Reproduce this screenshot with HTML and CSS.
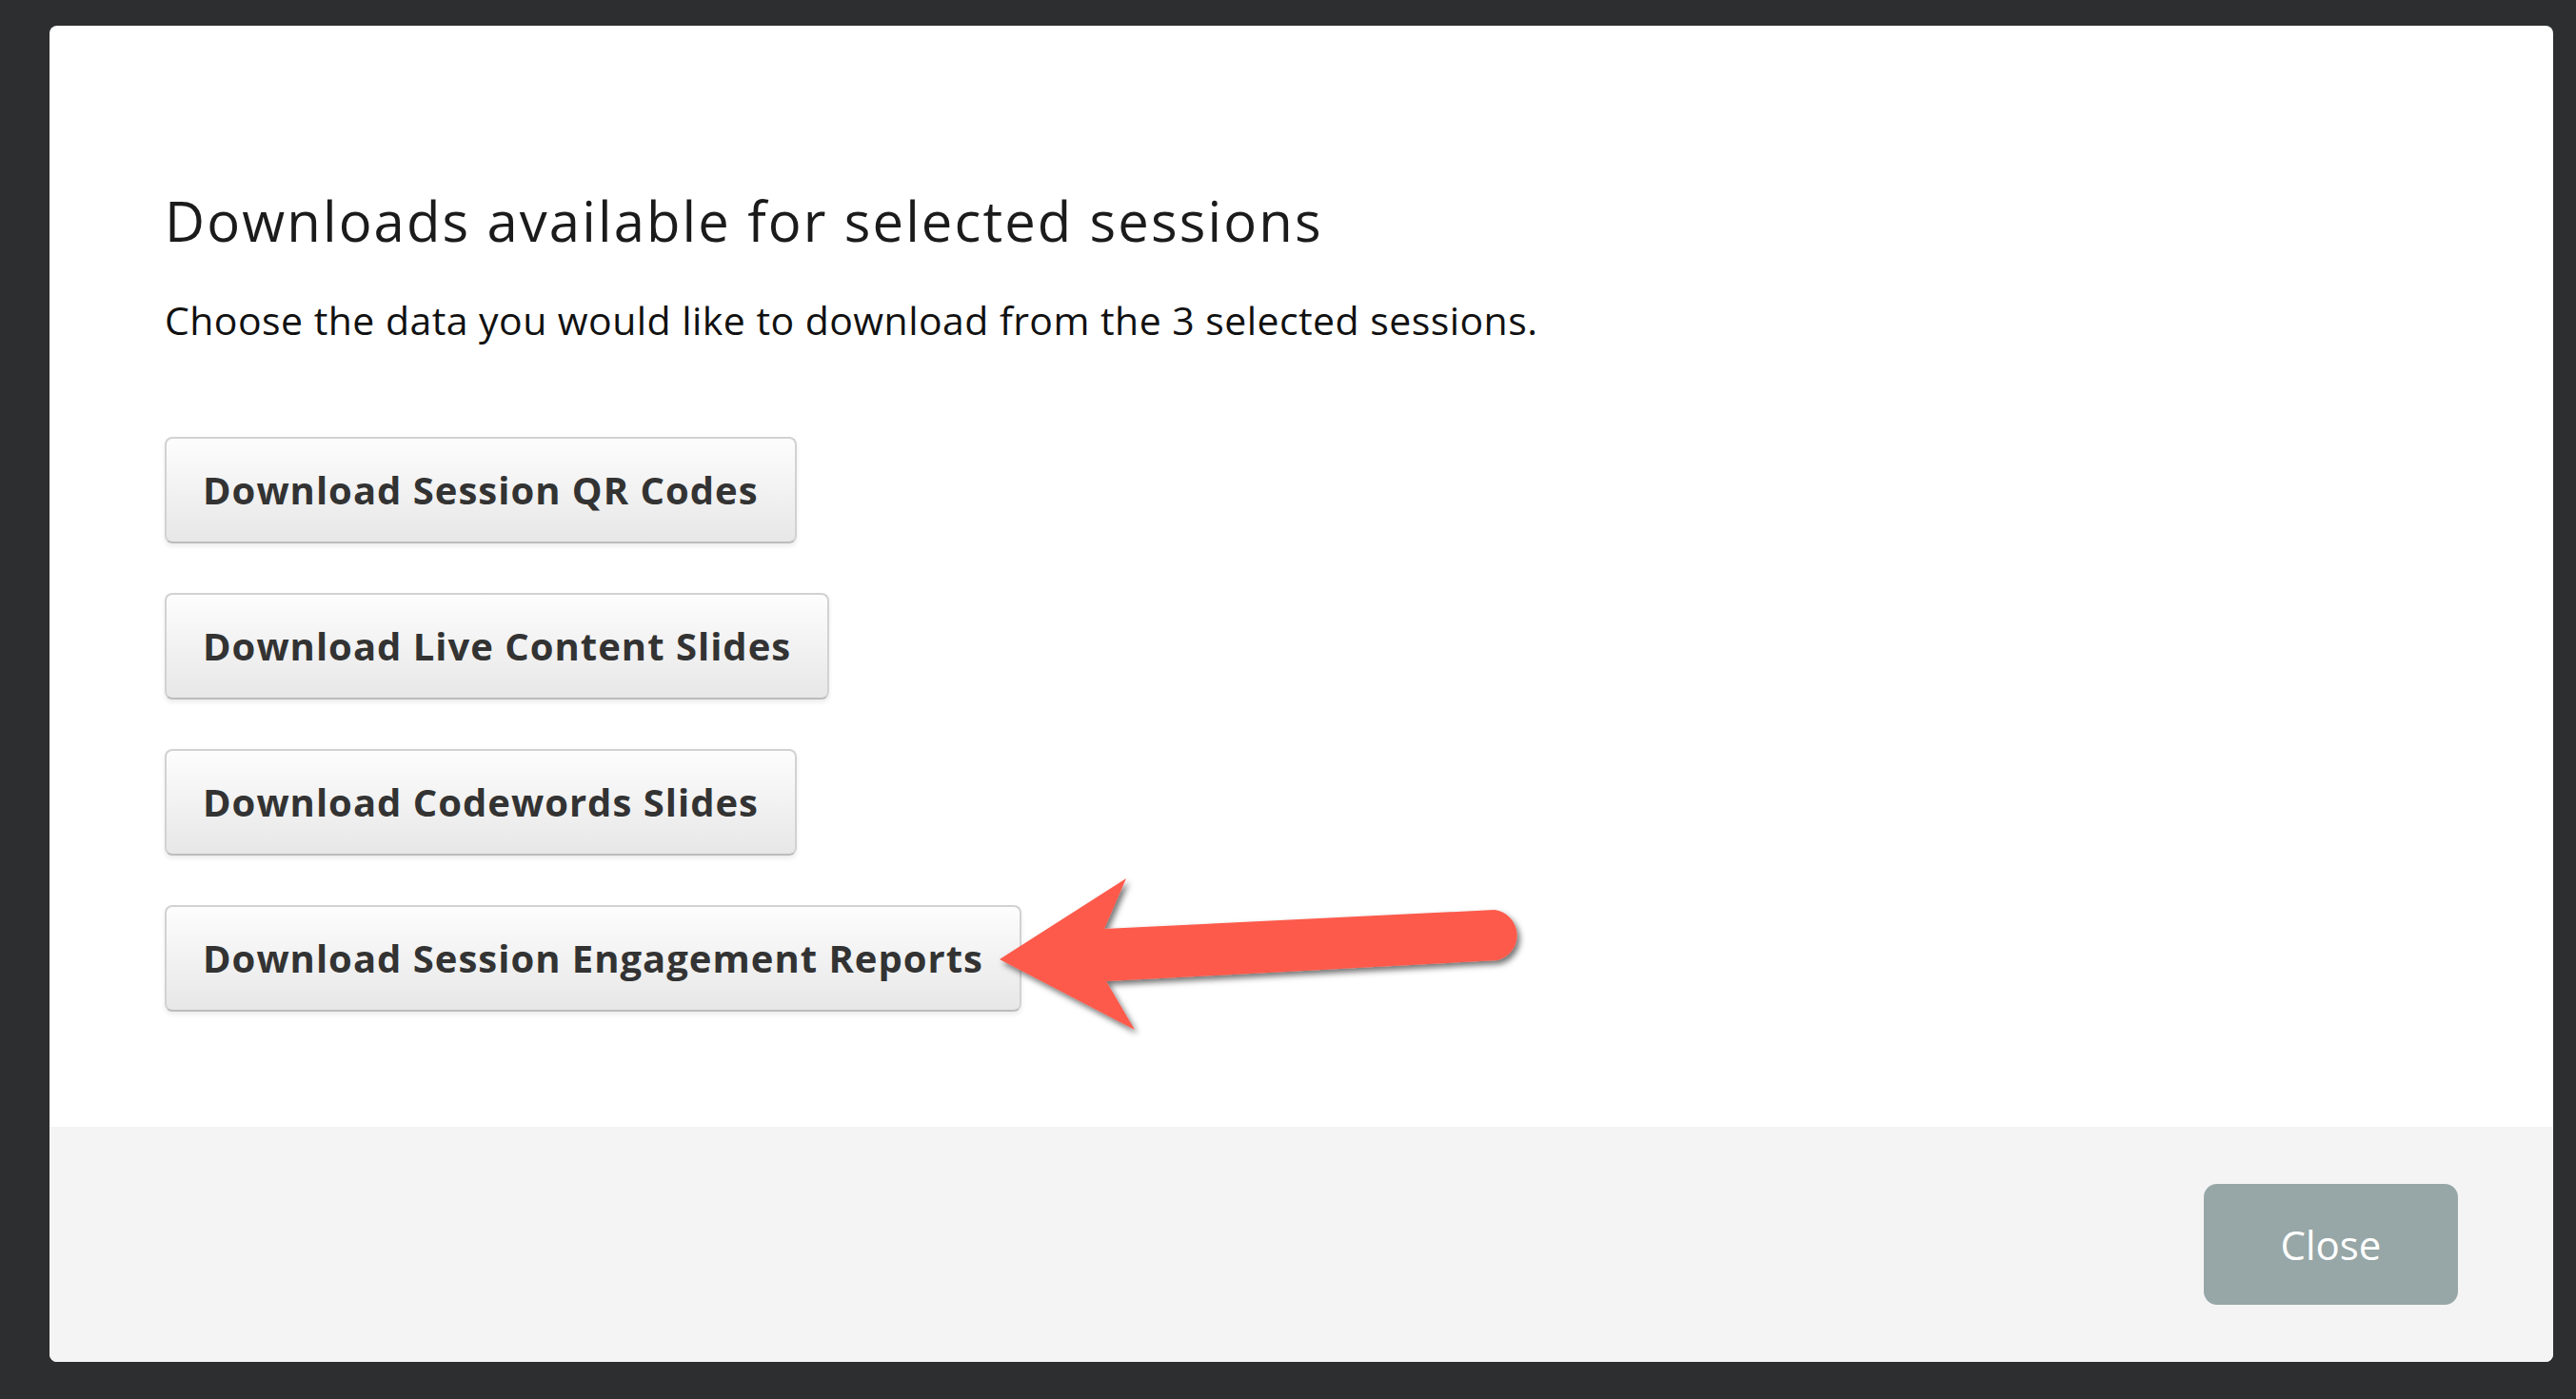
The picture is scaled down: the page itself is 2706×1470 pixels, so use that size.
FILE: index.html
```html
<!DOCTYPE html>
<html lang="en">
<head>
<meta charset="utf-8">
<title>Downloads</title>
<link rel="stylesheet" href="styles.css">
</head>
<body>
<div class="modal">
  <div class="modal-body">
    <h1 class="title">Downloads available for selected sessions</h1>
    <p class="subtitle">Choose the data you would like to download from the 3 selected sessions.</p>
    <div class="actions">
      <button class="dl-btn">Download Session QR Codes</button>
      <button class="dl-btn">Download Live Content Slides</button>
      <button class="dl-btn">Download Codewords Slides</button>
      <button class="dl-btn">Download Session Engagement Reports</button>
    </div>
  </div>
  <div class="modal-footer">
    <button class="close-btn">Close</button>
  </div>
  <svg class="arrow" width="600" height="220" viewBox="1030 900 600 220" xmlns="http://www.w3.org/2000/svg">
    <defs>
      <filter id="sh" x="-10%" y="-20%" width="130%" height="150%">
        <feDropShadow dx="3" dy="4" stdDeviation="3" flood-color="#000" flood-opacity="0.55"/>
      </filter>
    </defs>
    <path d="M1050,1008 L1183,923 L1160,976 L1570,956 A27,27 0 0 1 1573,1009 L1162,1031 L1192,1082 Z" fill="#fd5a4b" filter="url(#sh)"/>
  </svg>
</div>
</body>
</html>
```

FILE: styles.css
```css
html, body {
  margin: 0;
  padding: 0;
}

body {
  background: #2c2e2f;
  width: 2706px;
  height: 1470px;
  overflow: hidden;
  font-family: "Open Sans", "DejaVu Sans", sans-serif;
}

.modal {
  position: relative;
  margin: 27px 0 0 52px;
  width: 2630px;
  height: 1404px;
  background: #ffffff;
  border-radius: 8px;
  overflow: hidden;
  display: flex;
  flex-direction: column;
}

.modal-body {
  height: 1157px;
  box-sizing: border-box;
  padding: 170px 0 0 121px;
}

.title {
  margin: 0;
  font-size: 58px;
  line-height: 70px;
  font-weight: 400;
  color: #1b1b1b;
  letter-spacing: 2.1px;
}

.subtitle {
  margin: 41px 0 0;
  font-size: 41px;
  line-height: 57px;
  color: #111111;
  letter-spacing: 0.45px;
}

.actions {
  margin-top: 94px;
  display: flex;
  flex-direction: column;
  align-items: flex-start;
  gap: 52px;
}

.dl-btn {
  box-sizing: border-box;
  height: 112px;
  padding: 34px 38px;
  font-family: "Open Sans", "DejaVu Sans", sans-serif;
  font-size: 40px;
  line-height: 40px;
  font-weight: 700;
  color: #333333;
  background: linear-gradient(#fdfdfd, #e7e7e7);
  border: 2px solid #d2d2d2;
  border-bottom-color: #bcbcbc;
  border-radius: 8px;
  box-shadow: 0 3px 5px rgba(0, 0, 0, 0.08);
  letter-spacing: 1px;
}

.modal-footer {
  flex: 1;
  background: #f4f4f4;
  display: flex;
  align-items: center;
  justify-content: flex-end;
  padding-right: 100px;
}

.close-btn {
  width: 267px;
  height: 127px;
  border: none;
  border-radius: 14px;
  background: #97a7a7;
  color: #ffffff;
  font-family: "Open Sans", "DejaVu Sans", sans-serif;
  font-size: 42px;
  font-weight: 400;
  padding: 0;
}

.arrow {
  position: absolute;
  left: 978px;
  top: 873px;
}
```
